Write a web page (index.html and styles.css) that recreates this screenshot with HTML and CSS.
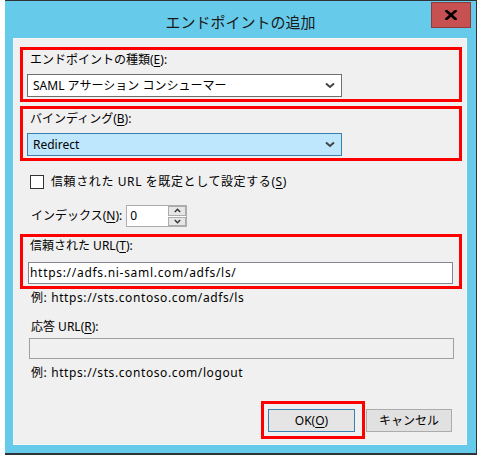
FILE: index.html
```html
<!DOCTYPE html>
<html lang="ja">
<head>
<meta charset="utf-8">
<title>エンドポイントの追加</title>
<link rel="stylesheet" href="styles.css">
</head>
<body>
<div class="window">
  <div class="titlebar">
    <div></div>
    <div class="title">エンドポイントの追加</div>
    <div class="close">
      <svg width="12" height="10" viewBox="0 0 12 10"><path d="M1.5 1 L10.5 9 M10.5 1 L1.5 9" stroke="#000" stroke-width="2.6" stroke-linecap="square"/></svg>
    </div>
  </div>
  <div class="panel">
    <div class="hl hl-type">
      <div class="label">エンドポイントの種類(<u>E</u>):</div>
      <div class="combo">
        <span>SAML アサーション コンシューマー</span>
        <svg class="chev" width="10" height="7" viewBox="0 0 10 7"><path d="M1 1.5 L5 5 L9 1.5" fill="none" stroke="#444" stroke-width="2"/></svg>
      </div>
    </div>
    <div class="hl hl-binding">
      <div class="label">バインディング(<u>B</u>):</div>
      <div class="combo combo-focus">
        <span>Redirect</span>
        <svg class="chev" width="10" height="7" viewBox="0 0 10 7"><path d="M1 1.5 L5 5 L9 1.5" fill="none" stroke="#444" stroke-width="2"/></svg>
      </div>
    </div>
    <div class="check-row">
      <span class="checkbox"></span>
      <span class="check-text">信頼された URL を既定として設定する(<u>S</u>)</span>
    </div>
    <div class="index-row">
      <span>インデックス(<u>N</u>):</span>
      <div class="spin">
        <div class="spin-input">0</div>
        <div class="spin-btns">
          <div class="spin-btn"><svg width="7" height="5" viewBox="0 0 7 5"><path d="M0.8 4 L3.5 1.2 L6.2 4" fill="none" stroke="#333" stroke-width="1.4"/></svg></div>
          <div class="spin-btn"><svg width="7" height="5" viewBox="0 0 7 5"><path d="M0.8 1 L3.5 3.8 L6.2 1" fill="none" stroke="#333" stroke-width="1.4"/></svg></div>
        </div>
      </div>
    </div>
    <div class="hl hl-url">
      <div class="label">信頼された URL(<u>T</u>):</div>
      <div class="textbox textbox-url">https://adfs.ni-saml.com/adfs/ls/</div>
    </div>
    <div class="hint hint-1">例: https://sts.contoso.com/adfs/ls</div>
    <div class="label label-reply">応答 URL(<u>R</u>):</div>
    <div class="textbox textbox-disabled"></div>
    <div class="hint hint-2">例: https://sts.contoso.com/logout</div>
    <div class="buttons">
      <div class="hl-btn"><div class="btn btn-default">OK(<u>O</u>)</div></div>
      <div class="btn btn-cancel">キャンセル</div>
    </div>
  </div>
</div>
</body>
</html>
```
FILE: styles.css
```css
html, body {
  margin: 0;
  padding: 0;
  background: #ffffff;
}
body {
  font-family: "Noto Sans", "Noto Sans CJK JP", sans-serif;
  font-size: 12px;
  line-height: 16px;
  color: #000;
}
u {
  text-decoration: underline;
  text-underline-offset: 2px;
}
.window {
  margin-left: 5px;
  width: 471px;
  height: 452px;
  background: #66cbea;
  border-top: 1px solid #2e3336;
  border-right: 1px solid #2e3336;
  border-bottom: 2px solid #2e3336;
  display: flex;
  flex-direction: column;
}
.titlebar {
  height: 37px;
  display: grid;
  grid-template-columns: 1fr auto 1fr;
  align-items: start;
}
.title {
  font-family: "Noto Sans CJK JP", sans-serif;
  font-size: 15px;
  line-height: 20px;
  color: #1a1a1a;
  padding-top: 11px;
}
.close {
  justify-self: end;
  margin: 1px 5px 0 0;
  width: 40px;
  height: 26px;
  box-sizing: border-box;
  background: #c75050;
  border: 1px solid #8f3a3a;
  display: flex;
  align-items: center;
  justify-content: center;
}
.panel {
  margin: 0 9px 0 8px;
  height: 407px;
  box-sizing: border-box;
  background: #f0f0f0;
  border: 1px solid #f6f6f6;
  padding: 8px 4px 0 6px;
  display: flex;
  flex-direction: column;
}
.hl {
  border: 3px solid #ff0000;
  padding: 2px 0 2px 4px;
  display: flex;
  flex-direction: column;
}
.label {
  margin-left: 3px;
  height: 16px;
}
.hl-type .combo,
.hl-binding .combo {
  margin-top: 6px;
}
.hl-binding {
  margin-top: 4px;
}
.combo {
  width: 315px;
  height: 23px;
  box-sizing: border-box;
  border: 1px solid #707070;
  background: #ffffff;
  display: flex;
  align-items: center;
  justify-content: space-between;
  padding: 0 6px 0 5px;
}
.combo-focus {
  background: #bee6fd;
  border-color: #3c7fb1;
}
.check-row {
  margin-top: 13px;
  margin-left: 10px;
  display: flex;
  align-items: center;
  gap: 7px;
}
.check-text {
  letter-spacing: 0.6px;
}
.checkbox {
  width: 14px;
  height: 14px;
  box-sizing: border-box;
  border: 1px solid #333;
  background: #fff;
}
.index-row {
  margin-top: 15px;
  margin-left: 11px;
  display: flex;
  align-items: center;
  gap: 4px;
}
.spin {
  width: 61px;
  height: 22px;
  box-sizing: border-box;
  border: 1px solid #abadb3;
  background: #fff;
  display: flex;
}
.spin-input {
  flex: 1;
  padding: 2px 0 0 3px;
}
.spin-btns {
  width: 18px;
  display: flex;
  flex-direction: column;
  gap: 1px;
}
.spin-btn {
  flex: 1;
  background: #e6e6e6;
  border: 1px solid #acacac;
  display: flex;
  align-items: center;
  justify-content: center;
}
.hl-url {
  margin-top: 7px;
  padding: 1px 0 2px 5px;
}
.hl-url .label {
  margin-left: 2px;
}
.textbox {
  margin-top: 8px;
  width: 425px;
  height: 22px;
  box-sizing: border-box;
  border: 1px solid #828790;
  background: #fff;
  padding: 2px 0 0 1px;
  white-space: nowrap;
}
.textbox-url {
  letter-spacing: 0.7px;
}
.hint {
  margin-left: 11px;
  height: 16px;
  letter-spacing: 0.6px;
}
.hint-1 {
  margin-top: 1px;
}
.label-reply {
  margin-top: 13px;
  margin-left: 11px;
}
.textbox-disabled {
  margin-top: 3px;
  margin-left: 9px;
  height: 21px;
  background: #f0f0f0;
  border-color: #a0a0a0;
}
.hint-2 {
  margin-top: 6px;
}
.buttons {
  margin-top: 20px;
  margin-right: 10px;
  display: flex;
  justify-content: flex-end;
  align-items: flex-start;
  gap: 1px;
}
.hl-btn {
  border: 3px solid #ff0000;
  padding: 5px 7px 4px 4px;
}
.btn {
  width: 87px;
  height: 23px;
  box-sizing: border-box;
  border: 1px solid #acacac;
  background: #e1e1e1;
  display: flex;
  align-items: center;
  justify-content: center;
}
.btn-default {
  border-color: #3c7fb1;
  background: #e5e5e5;
}
.btn-cancel {
  width: 86px;
  margin-top: 8px;
}
```
